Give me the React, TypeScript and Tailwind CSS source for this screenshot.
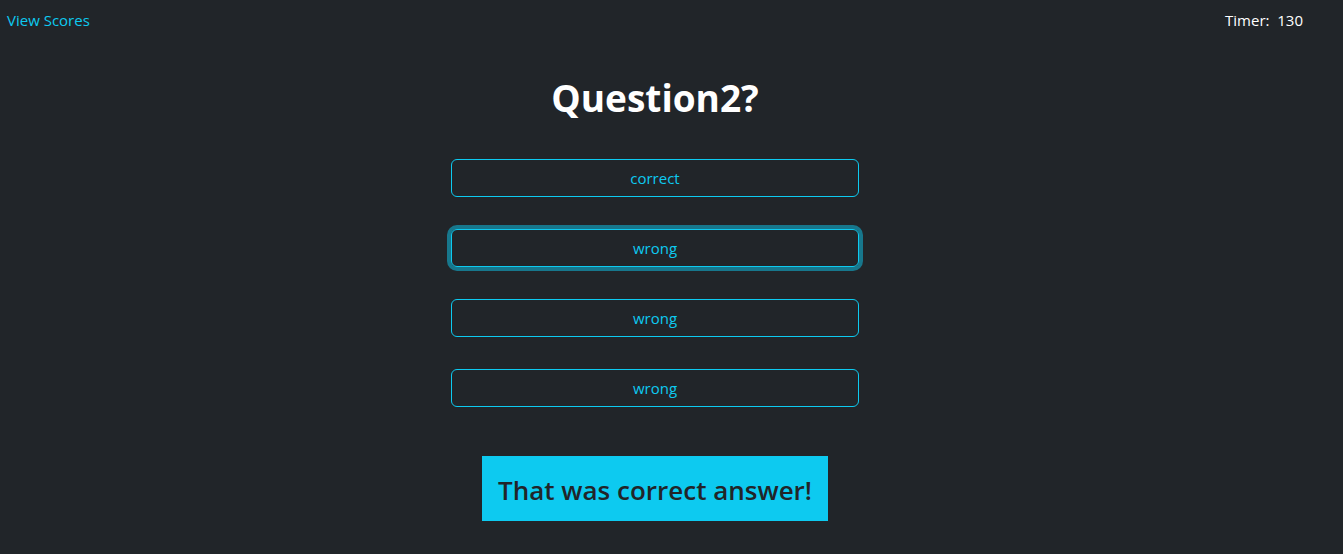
import React from 'react';

const answers = ['correct', 'wrong', 'wrong', 'wrong'];

export default function App() {
  return (
    <div className="min-h-[554px] bg-[#212529] text-white" style={{ fontFamily: '"Open Sans", "Noto Sans", sans-serif' }}>
      <header className="flex h-10 items-center justify-between pl-[7px] pr-[40px] text-[15px]">
        <a href="#" className="text-[#0dcaf0]">View Scores</a>
        <span className="whitespace-pre">Timer:  130</span>
      </header>

      <main className="flex flex-col items-center pr-[33px]">
        <h1 className="mt-[34px] text-[37px] font-bold leading-[48px]">Question2?</h1>

        <div className="mt-[37px] flex w-[408px] flex-col gap-[32px]">
          {answers.map((a, i) => (
            <button
              key={i}
              className={
                'h-[38px] rounded-[6px] border border-[#0dcaf0] text-[15px] text-[#0dcaf0] ' +
                (i === 1 ? 'shadow-[0_0_0_4px_rgba(13,202,240,0.5)]' : '')
              }
            >
              {a}
            </button>
          ))}
        </div>

        <div className="mt-[49px] w-[346px] bg-[#0dcaf0] pt-[18px] pb-[14px] text-center text-[26px] font-semibold leading-[33px] text-[#212529]">
          That was correct answer!
        </div>
      </main>
    </div>
  );
}
